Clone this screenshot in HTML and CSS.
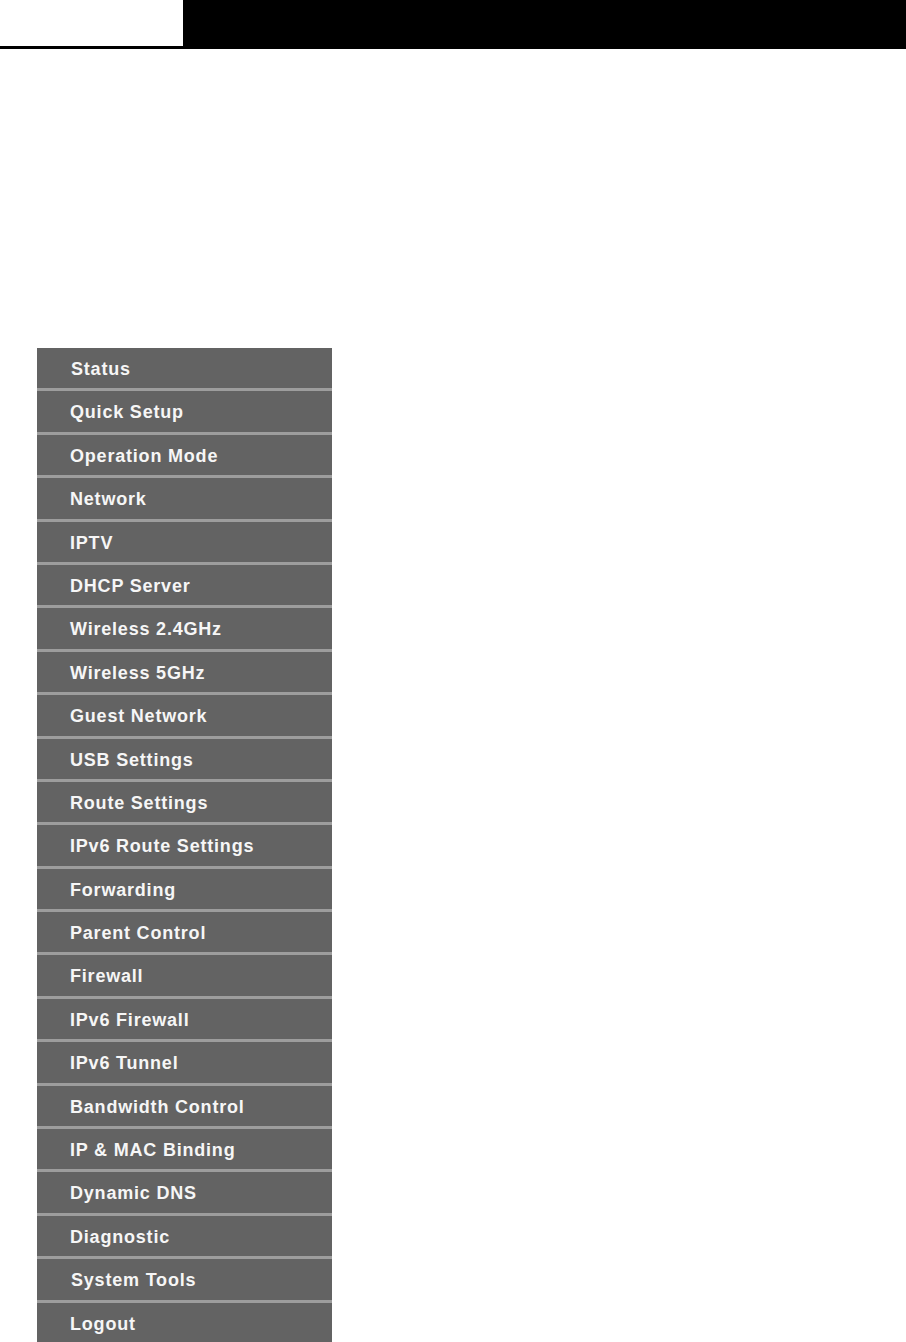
FILE: index.html
```html
<!DOCTYPE html>
<html lang="en">
<head>
<meta charset="utf-8">
<title>Menu</title>
<link rel="stylesheet" href="styles.css">
</head>
<body>
<header class="topbar">
  <div class="topbar-blank"></div>
</header>
<nav class="menu">
  <div class="item shift">Status</div>
  <div class="item">Quick Setup</div>
  <div class="item">Operation Mode</div>
  <div class="item">Network</div>
  <div class="item">IPTV</div>
  <div class="item">DHCP Server</div>
  <div class="item">Wireless 2.4GHz</div>
  <div class="item">Wireless 5GHz</div>
  <div class="item">Guest Network</div>
  <div class="item">USB Settings</div>
  <div class="item">Route Settings</div>
  <div class="item">IPv6 Route Settings</div>
  <div class="item">Forwarding</div>
  <div class="item">Parent Control</div>
  <div class="item">Firewall</div>
  <div class="item">IPv6 Firewall</div>
  <div class="item">IPv6 Tunnel</div>
  <div class="item">Bandwidth Control</div>
  <div class="item">IP &amp; MAC Binding</div>
  <div class="item">Dynamic DNS</div>
  <div class="item">Diagnostic</div>
  <div class="item shift">System Tools</div>
  <div class="item">Logout</div>
</nav>
</body>
</html>
```
FILE: styles.css
```css
html, body {
  margin: 0;
  padding: 0;
  background: #ffffff;
}

body {
  font-family: "Liberation Sans", Arial, sans-serif;
  overflow: hidden;
  height: 1342px;
}

.topbar {
  display: flex;
  height: 49px;
  background: #000000;
}

.topbar-blank {
  width: 183px;
  height: 46px;
  background: #ffffff;
}

.menu {
  display: flex;
  flex-direction: column;
  width: 295px;
  margin: 299px 0 0 37px;
  background: #636363;
}

.item {
  height: 40.4px;
  line-height: 42px;
  padding-left: 33px;
  color: #f6f6f6;
  font-size: 18px;
  font-weight: bold;
  letter-spacing: 0.8px;
  white-space: nowrap;
  background: #636363;
}

.item + .item {
  border-top: 3px solid #9d9d9d;
}

.item.shift {
  padding-left: 34px;
}
```
